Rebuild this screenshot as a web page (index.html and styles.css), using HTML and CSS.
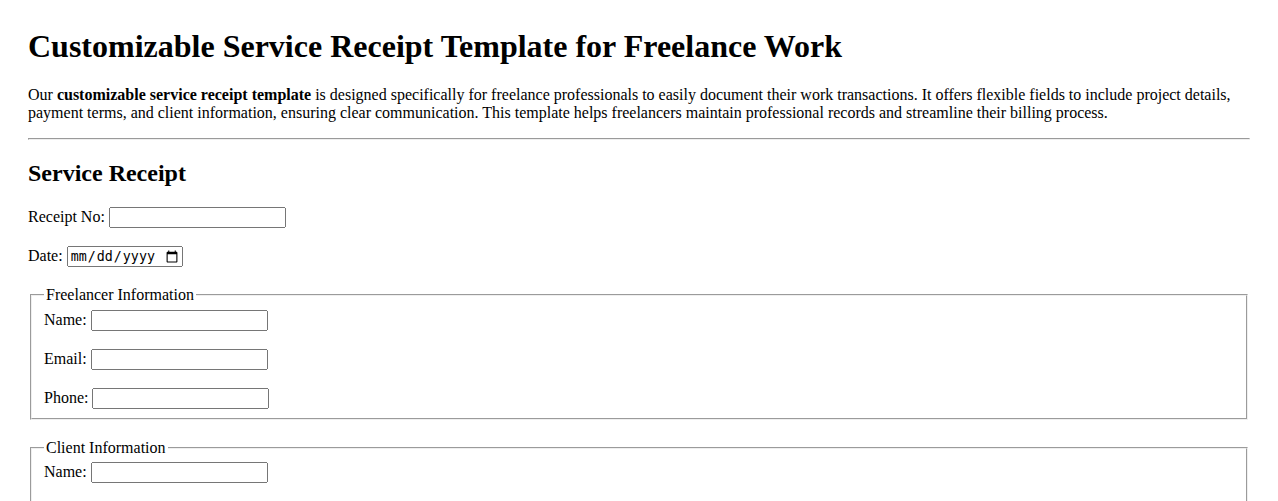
FILE: index.html
```html
<!DOCTYPE html>
<html lang="en">
<head>
<meta charset="utf-8">
<title>Customizable Service Receipt Template for Freelance Work</title>
<link rel="stylesheet" href="styles.css">
</head>
<body>
<h1 class="title">Customizable Service Receipt Template for Freelance Work</h1>
<p class="intro">Our <strong>customizable service receipt template</strong> is designed specifically for freelance professionals to easily document their work transactions. It offers flexible fields to include project details, payment terms, and client information, ensuring clear communication. This template helps freelancers maintain professional records and streamline their billing process.</p>
<hr class="divider">
<h2 class="subtitle">Service Receipt</h2>
<form class="receipt">
  <div class="field"><label for="receipt-no">Receipt No:</label> <input class="text-input" type="text" id="receipt-no"></div>
  <div class="field field-last"><label for="date">Date:</label> <input class="date-input" type="date" id="date"></div>
  <fieldset class="group">
    <legend>Freelancer Information</legend>
    <div class="field"><label for="f-name">Name:</label> <input class="text-input" type="text" id="f-name"></div>
    <div class="field"><label for="f-email">Email:</label> <input class="text-input" type="email" id="f-email"></div>
    <div class="field"><label for="f-phone">Phone:</label> <input class="text-input" type="tel" id="f-phone"></div>
  </fieldset>
  <fieldset class="group">
    <legend>Client Information</legend>
    <div class="field"><label for="c-name">Name:</label> <input class="text-input" type="text" id="c-name"></div>
    <div class="field"><label for="c-email">Email:</label> <input class="text-input" type="email" id="c-email"></div>
    <div class="field"><label for="c-phone">Phone:</label> <input class="text-input" type="tel" id="c-phone"></div>
  </fieldset>
</form>
</body>
</html>
```
FILE: styles.css
```css
html {
  background: #fff;
}
body {
  margin: 0;
  padding: 28px 28px;
  font-family: "Liberation Serif", "Times New Roman", serif;
  font-size: 16px;
  color: #000;
}
.title {
  margin: 0 0 21.44px;
  font-size: 32px;
}
.intro {
  margin: 0 0 16px;
}
.divider {
  margin: 0;
}
.subtitle {
  font-size: 24px;
  margin: 19.92px 0;
}
.receipt {
  margin: 0;
}
.field {
  margin-bottom: 18px;
  height: 21px;
}
.field-last {
  margin-bottom: 19px;
}
.group .field:last-child {
  margin-bottom: 0;
}
.text-input {
  width: 177px;
  height: 21px;
  box-sizing: border-box;
}
.date-input {
  width: 116px;
  height: 21px;
  box-sizing: border-box;
}
.group {
  margin: 0 2px 19px;
  padding-bottom: 9px;
}
```
